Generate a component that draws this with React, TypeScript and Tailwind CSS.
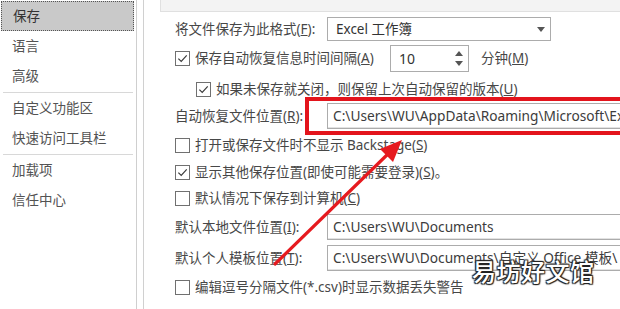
import type { ReactNode } from 'react';

const sideItems = [
  { label: '保存', active: true },
  { label: '语言' },
  { label: '高级', divider: true },
  { label: '自定义功能区' },
  { label: '快速访问工具栏', divider: true },
  { label: '加载项' },
  { label: '信任中心' },
];

function Box({ checked }: { checked?: boolean }) {
  return (
    <span className="flex h-[15px] w-[15px] shrink-0 items-center justify-center border border-[#707070] bg-white">
      {checked && (
        <svg viewBox="0 0 12 12" className="h-[11px] w-[11px]">
          <path d="M1.5 6.2 L4.6 9.2 L10.6 2.6" fill="none" stroke="#3a3a3a" strokeWidth="1.3" />
        </svg>
      )}
    </span>
  );
}

function Check({ checked, children, indent }: { checked?: boolean; children: ReactNode; indent?: boolean }) {
  return (
    <div className={`flex h-[24px] items-center gap-[5px] ${indent ? 'pl-[21px]' : ''}`}>
      <Box checked={checked} />
      <span>{children}</span>
    </div>
  );
}

function Field({ label, value }: { label: ReactNode; value: string }) {
  return (
    <div className="flex items-center">
      <span className="w-[152px] shrink-0">{label}</span>
      <div className="flex h-[26px] flex-1 items-center overflow-hidden whitespace-nowrap border border-r-0 border-[#acacac] pl-[5px] text-[13.7px] text-[#3c3c3c] shadow-[inset_0_-1px_0_#e2e2e2]">
        {value}
      </div>
    </div>
  );
}

export default function App() {
  return (
    <div className="relative flex h-[309px] w-[620px] overflow-hidden bg-white font-['Noto_Sans','Noto_Sans_CJK_SC',sans-serif] text-[13.5px] text-[#474747]">
      {/* left nav */}
      <aside className="w-[137px] shrink-0 border-r border-[#cfcfcf] pt-px text-[#535353]">
        {sideItems.map((it) => (
          <div key={it.label}>
            <div
              className={`ml-px mr-[2px] flex h-[30px] items-center pl-[11px] ${
                it.active ? 'border border-dotted border-[#555] bg-[#c9c9c9] text-[#333]' : ''
              }`}
            >
              {it.label}
            </div>
            {it.divider && <div className="mx-[3px] my-[0.5px] h-px bg-[#d8d8d8]" />}
          </div>
        ))}
      </aside>
      <div className="ml-[6px] w-[2px] shrink-0 border-l border-[#d0d0d0]" />

      {/* options */}
      <main className="flex min-w-0 flex-1 flex-col pl-[15px]">
        <div className="h-[12px] border-b border-l border-[#e0e0e0] bg-[#f3f3f3]" />
        <div className="flex flex-col pl-[15px]">
          <div className="mt-[4px] flex h-[26px] items-center">
            <span className="w-[152px] shrink-0">
              将文件保存为此格式(<u>F</u>):
            </span>
            <div className="flex h-[24px] w-[224px] items-center justify-between border border-[#acacac] pl-[8px] pr-[5px] text-[#333]">
              <span>Excel 工作簿</span>
              <svg viewBox="0 0 8 5" className="h-[5px] w-[8px]">
                <path d="M0 0 H8 L4 5 Z" fill="#555" />
              </svg>
            </div>
          </div>

          <div className="mt-[3px] flex h-[27px] items-center">
            <div className="flex w-[215px] items-center gap-[5px]">
              <Box checked />
              <span>
                保存自动恢复信息时间间隔(<u>A</u>)
              </span>
            </div>
            <div className="flex h-[27px] w-[79px] items-center justify-between border border-[#acacac] pl-[8px] pr-[5px] text-[14px] text-[#333]">
              <span>10</span>
              <span className="flex flex-col gap-[5px]">
                <svg viewBox="0 0 8 5" className="h-[5px] w-[8px]">
                  <path d="M0 5 H8 L4 0 Z" fill="#555" />
                </svg>
                <svg viewBox="0 0 8 5" className="h-[5px] w-[8px]">
                  <path d="M0 0 H8 L4 5 Z" fill="#555" />
                </svg>
              </span>
            </div>
            <span className="ml-[12px]">
              分钟(<u>M</u>)
            </span>
          </div>

          <div className="mt-[5px]">
            <Check checked indent>
              如果未保存就关闭，则保留上次自动保留的版本(<u>U</u>)
            </Check>
          </div>

          <div className="mt-[2px]">
            <Field
              label={
                <>
                  自动恢复文件位置(<u>R</u>):
                </>
              }
              value="C:\Users\WU\AppData\Roaming\Microsoft\Excel\"
            />
          </div>

          <div className="mt-[4px]">
            <Check>
              打开或保存文件时不显示 Backstage(<u>S</u>)
            </Check>
          </div>
          <div className="mt-[3px]">
            <Check checked>
              显示其他保存位置(即使可能需要登录)(<u>S</u>)。
            </Check>
          </div>
          <div className="mt-[2px]">
            <Check>
              默认情况下保存到计算机(<u>C</u>)
            </Check>
          </div>

          <div className="mt-[4px]">
            <Field
              label={
                <>
                  默认本地文件位置(<u>I</u>):
                </>
              }
              value="C:\Users\WU\Documents"
            />
          </div>
          <div className="mt-[5px]">
            <Field
              label={
                <>
                  默认个人模板位置(<u>T</u>):
                </>
              }
              value="C:\Users\WU\Documents\自定义 Office 模板\"
            />
          </div>
          <div className="mt-[4px]">
            <Check>编辑逗号分隔文件(*.csv)时显示数据丢失警告</Check>
          </div>
        </div>
      </main>

      {/* annotation overlay */}
      <div className="pointer-events-none absolute left-[305px] top-[97px] h-[38px] w-[330px] border-[4px] border-[#e3141c]" />
      <svg className="pointer-events-none absolute left-0 top-0" width="620" height="309">
        <line x1="275" y1="264" x2="390" y2="152" stroke="#e61a1f" strokeWidth="3.2" strokeLinecap="round" />
        <polygon points="402,140 393,162 380,149" fill="#e61a1f" />
      </svg>
      <div className="pointer-events-none absolute left-[472px] top-[259px] font-['Noto_Sans_CJK_SC',sans-serif] text-[24px] font-medium leading-none tracking-[0.5px] text-white [text-shadow:0_0_1px_#222,1px_1px_1px_#222,-1px_-1px_1px_#222,1px_-1px_1px_#222,-1px_1px_1px_#222]">
        易坊好文馆
      </div>
    </div>
  );
}
